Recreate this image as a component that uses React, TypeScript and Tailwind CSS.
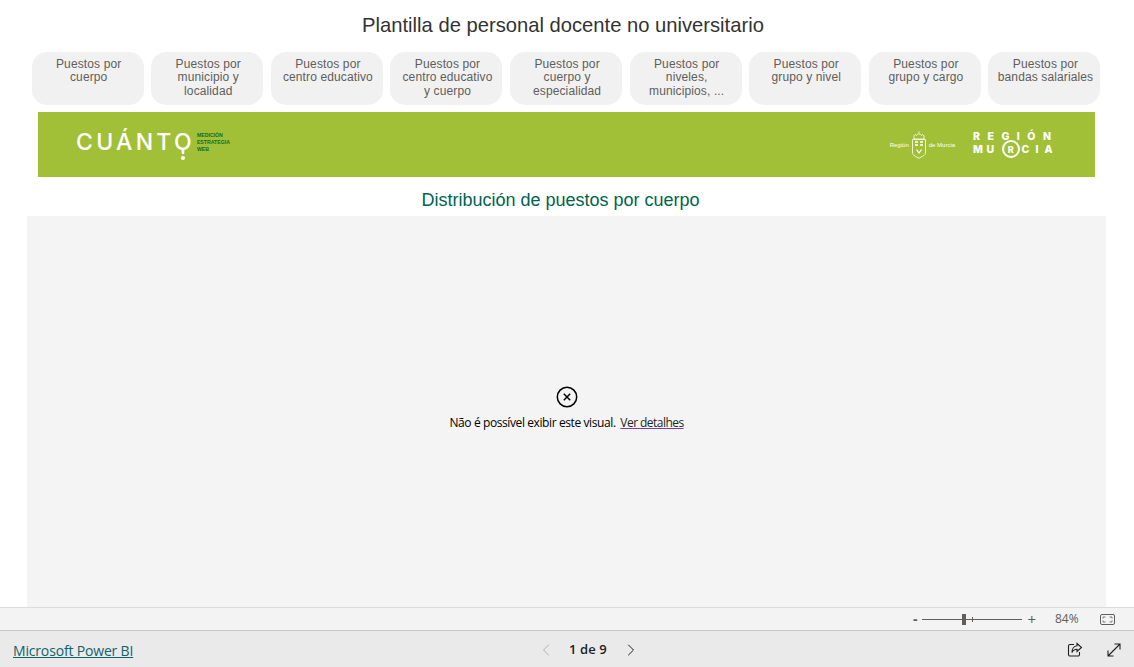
import React from 'react';
import { ChevronLeft, ChevronRight } from 'lucide-react';

const tabs = [
  'Puestos por cuerpo',
  'Puestos por municipio y localidad',
  'Puestos por centro educativo',
  'Puestos por centro educativo y cuerpo',
  'Puestos por cuerpo y especialidad',
  'Puestos por niveles, municipios, ...',
  'Puestos por grupo y nivel',
  'Puestos por grupo y cargo',
  'Puestos por bandas salariales',
];

const CuantoLogo = () => (
  <div className="mt-[-6px] flex items-start">
    <div className="relative font-['Inter',sans-serif] text-[23px] leading-[28px] font-medium tracking-[3.300px] text-white">
      CUÁNTO
      <svg className="absolute left-[100px] top-[20px]" width="14" height="14" viewBox="0 0 14 14" fill="none">
        <path d="M7 0v5" stroke="#fff" strokeWidth="2.600" strokeLinecap="round" />
        <circle cx="7" cy="10" r="2" fill="#fff" />
      </svg>
    </div>
    <div className="ml-[2px] mt-[4px] font-['Liberation_Sans',sans-serif] text-[5.200px] leading-[7px] font-bold text-[#0f6b2f]">
      <div>MEDICIÓN</div>
      <div>ESTRATEGIA</div>
      <div>WEB</div>
    </div>
  </div>
);

const Shield = () => (
  <svg width="16" height="28" viewBox="0 0 16 28" fill="none" stroke="#fff" strokeWidth="0.800">
    <path d="M3 8V5.500C3 3.500 5 3 5.500 4.500 6 2.500 10 2.500 10.500 4.500 11 3 13 3.500 13 5.500V8Z" />
    <path d="M8 0.500V2.500" />
    <path d="M1.500 8.500H14.500V21C14.500 25 10.500 25.500 8 27.300 5.500 25.500 1.500 25 1.500 21Z" />
    <path d="M4 11h3M9 11h3M4 14h3M9 14h3" strokeWidth="1.300" />
    <path d="M5.500 18.500 8 22l2.500-3.500" strokeWidth="1.200" />
  </svg>
);

const MurciaLogos = () => (
  <div className="flex items-center text-white">
    <div className="flex items-center gap-[2px] font-['Liberation_Sans',sans-serif] text-[6px] leading-none">
      <span>Región</span>
      <Shield />
      <span>de Murcia</span>
    </div>
    <div className="ml-[18px] mt-[-4px] font-['Inter',sans-serif] text-[10.500px] leading-[13px] font-extrabold">
      <div className="h-[13px] tracking-[7.500px]">REGIÓN</div>
      <div className="flex h-[13px] items-center tracking-[3.500px]">
        <span>MU</span>
        <span className="ml-[4px] mr-[2px] flex h-[18px] w-[18px] items-center justify-center rounded-full border-2 border-white text-[9px] leading-none tracking-normal">R</span>
        <span className="tracking-[6px]">CIA</span>
      </div>
    </div>
  </div>
);

const ShareIcon = () => (
  <svg width="16" height="16" viewBox="0 0 16 16" fill="none" stroke="#201f1e" strokeWidth="1.100">
    <path d="M7 2.500H3A1.500 1.500 0 0 0 1.500 4v8.500A1.500 1.500 0 0 0 3 14h8a1.500 1.500 0 0 0 1.500-1.500V10" />
    <path d="M10 1.500 14.500 5.500 10 9.500V7.300C7.500 7.300 6 8.300 5 10.500 5 7 7 4 10 3.800Z" />
  </svg>
);

const ExpandIcon = () => (
  <svg width="14" height="14" viewBox="0 0 14 14" fill="none" stroke="#201f1e" strokeWidth="1.100">
    <path d="M1 13 13 1M7.500 1H13V6.500M1 7.500V13H6.500" />
  </svg>
);

const FitIcon = () => (
  <svg width="15" height="11" viewBox="0 0 15 11" fill="none" stroke="#605e5c">
    <rect x="0.500" y="0.500" width="14" height="10" rx="1.500" />
    <path d="M3 4.500V3h2.500M12 4.500V3H9.500M3 6.500V8h2.500M12 6.500V8H9.500" strokeWidth="0.800" />
  </svg>
);

export default function App() {
  return (
    <div className="flex h-[667px] w-[1134px] flex-col overflow-hidden bg-white">
      <h1 className="flex h-[52px] shrink-0 items-center justify-center pb-[2px] pr-[8px] font-['Liberation_Sans',sans-serif] text-[20.200px] font-normal text-[#333333]">
        Plantilla de personal docente no universitario
      </h1>

      <div className="ml-[31.700px] grid w-[1068.800px] shrink-0 grid-cols-9 gap-x-[7.600px]">
        {tabs.map((t) => (
          <div
            key={t}
            className="h-[53px] rounded-[15px] bg-[#f1f1f1] pl-[8px] pr-[6px] pt-[5.500px] text-center font-['Liberation_Sans',sans-serif] text-[12px] leading-[13.500px] tracking-[0.120px] text-[#605e5c]"
          >
            {t}
          </div>
        ))}
      </div>

      <div className="ml-[38px] mt-[7px] flex h-[65px] w-[1057px] shrink-0 items-center justify-between bg-[#a2c037] pl-[38px] pr-[36.500px]">
        <CuantoLogo />
        <MurciaLogos />
      </div>

      <h2 className="flex h-[39px] shrink-0 items-center justify-center pr-[13px] pt-[7px] font-['Liberation_Sans',sans-serif] text-[18px] font-normal text-[#00634f]">
        Distribución de puestos por cuerpo
      </h2>

      <div className="ml-[27px] flex w-[1079px] flex-1 flex-col items-center justify-center bg-[#f4f4f4] pb-[7px]">
        <svg width="22" height="22" viewBox="0 0 22 22" fill="none" stroke="#000">
          <circle cx="11" cy="11" r="9.700" strokeWidth="1.500" />
          <path d="M7.800 7.800 14.200 14.200M14.200 7.800 7.800 14.200" strokeWidth="1.500" />
        </svg>
        <p className="mt-[7px] font-['Open_Sans',sans-serif] text-[12px] leading-[16px] tracking-[-0.400px] text-[#000]">
          Não é possível exibir este visual.{' '}
          <a href="#" className="ml-[2px] tracking-[-0.550px] text-[#252423] underline decoration-[#7a3fa8]">Ver detalhes</a>
        </p>
      </div>

      <div className="flex h-[23px] shrink-0 items-center justify-end border-t border-[#dcdcdc] bg-[#f3f3f3] pr-[19px] font-['Open_Sans',sans-serif] text-[#605e5c]">
        <span className="text-[14px] font-bold leading-none">-</span>
        <div className="relative ml-[5px] h-[1px] w-[100px] bg-[#605e5c]">
          <div className="absolute left-[40px] top-[-5px] h-[11px] w-[4px] bg-[#605e5c]" />
          <div className="absolute left-[50px] top-[-2px] h-[5px] w-[1px] bg-[#605e5c]" />
        </div>
        <span className="ml-[5px] text-[15px] leading-none">+</span>
        <span className="ml-[19px] w-[25px] text-[12px] leading-none">84%</span>
        <span className="ml-[20px] flex"><FitIcon /></span>
      </div>

      <div className="relative flex h-[37px] shrink-0 items-center justify-between border-t border-[#c8c8c8] bg-[#eaeaea] pl-[13px] pr-[13px] pt-[2px] font-['Open_Sans',sans-serif]">
        <a href="#" className="text-[14px] font-medium tracking-[-0.170px] text-[#11636b] underline">Microsoft Power BI</a>
        <div className="absolute left-[536px] top-[1px] flex h-full items-center">
          <ChevronLeft size={20} strokeWidth={1.200} className="text-[#b3b0ad]" />
          <span className="ml-[13px] text-[13px] font-semibold tracking-[0.100px] text-[#201f1e]">1 de 9</span>
          <ChevronRight size={20} strokeWidth={1.200} className="ml-[14px] text-[#201f1e]" />
        </div>
        <div className="flex items-center gap-[24px]">
          <ShareIcon />
          <ExpandIcon />
        </div>
      </div>
    </div>
  );
}
